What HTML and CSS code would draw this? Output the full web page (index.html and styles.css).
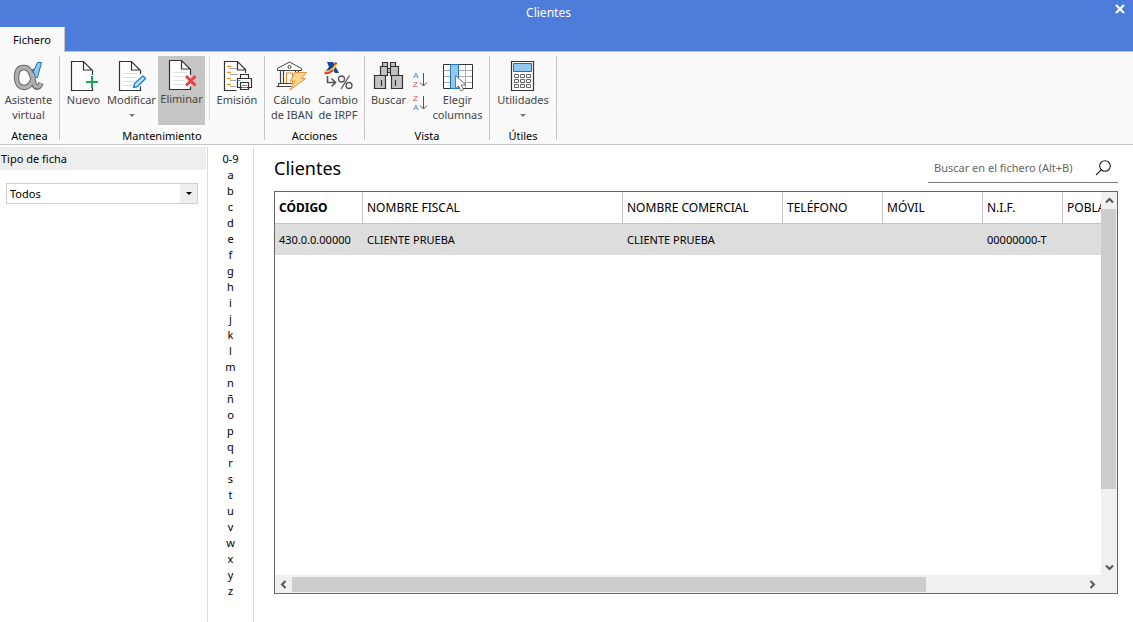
FILE: index.html
```html
<!DOCTYPE html>
<html lang="es">
<head>
<meta charset="utf-8">
<meta name="viewport" content="width=device-width, initial-scale=1">
<title>Clientes</title>
<link rel="stylesheet" href="styles.css">
</head>
<body>
<div class="window">
  <header class="titlebar">
    <div class="title">Clientes</div>
    <button class="close" aria-label="Cerrar">
      <svg width="10" height="10" viewBox="0 0 10 10"><path d="M1 1l8 8M9 1l-8 8" stroke="#fff" stroke-width="2.2"/></svg>
    </button>
  </header>
  <nav class="tabs"><button class="tab">Fichero</button></nav>

  <div class="ribbon">
    <section class="group">
      <div class="tools">
        <button class="tool tool-full">
          <svg width="32" height="32" viewBox="0 0 32 32" fill="none">
            <path d="M22 9C21 18 18 27.500 11 27.500C6 27.500 3.500 23 3.500 17.500C3.500 11 6 7.500 11 7.500C18 7.500 19 17 21 23.500C22 28.500 26 28.500 28 23" stroke="#666" stroke-width="5.400"/>
            <path d="M22 10C21 18 18 27.500 11 27.500C6 27.500 3.500 23 3.500 17.500C3.500 11 6 7.500 11 7.500C18 7.500 19 17 21 23.500C22 28 26 28 28 23.500" stroke="#b0b0b0" stroke-width="3.400"/>
            <path d="M24.500 2.500h4l-4 15h-2l-2-6z" fill="#92c8ef" stroke="#1d6fb5"/>
          </svg>
          <span>Asistente<br>virtual</span>
        </button>
      </div>
      <h2 class="caption">Atenea</h2>
    </section>

    <section class="group">
      <div class="tools">
        <button class="tool tool-s">
          <svg width="32" height="32" viewBox="0 0 32 32" fill="none">
            <path d="M22.500 15V9.500L14.500 1.500H3.500v29h18" fill="#fff"/>
            <path d="M24.500 15V10.500L15.500 1.500H3.500v29h21v-3M15.500 2v8h9" stroke="#333" stroke-width="1.200"/>
            <path d="M24 16v12M18 22h12" stroke="#16a951" stroke-width="2"/>
          </svg>
          <span>Nuevo</span>
        </button>
        <button class="tool tool-m">
          <svg width="32" height="32" viewBox="0 0 32 32" fill="none">
            <path d="M24.500 15V10.500L15.500 1.500H3.500v29h21v-4" fill="#fff"/>
            <path d="M24.500 14V10.500L15.500 1.500H3.500v29h21v-4M15.500 2v8h9" stroke="#333" stroke-width="1.200"/>
            <path d="M7 13.500h14M7 17.500h14M7 21.500h11M7 25.500h9" stroke="#ddd"/>
            <path d="M17.500 27.500l1-4L27 16l2.500 2.500-8 8z" fill="#c4e3f7" stroke="#2586cd" stroke-width="1.400"/>
          </svg>
          <span>Modificar</span>
          <i class="drop"></i>
        </button>
        <button class="tool tool-s tool-active">
          <svg width="32" height="32" viewBox="0 0 32 32" fill="none">
            <path d="M24.500 10.500L15.500 1.500H3.500v29h21z" fill="#fff"/>
            <path d="M24.500 16V10.500L15.500 1.500H3.500v29h21v-3M15.500 2v8h9" stroke="#333" stroke-width="1.200"/>
            <path d="M7 13.500h14M7 17.500h12M7 21.500h12M7 25.500h11" stroke="#e2e2e2"/>
            <path d="M20 17l9.500 9.500M29.500 17L20 26.500" stroke="#ee3f3f" stroke-width="3"/>
          </svg>
          <span>Eliminar</span>
        </button>
        <i class="divider"></i>
        <button class="tool tool-l">
          <svg width="32" height="32" viewBox="0 0 32 32" fill="none">
            <path d="M24.500 10.500L16.500 1.500H3.500v29h21z" fill="#fff"/>
            <path d="M24.500 13V9.500L16.500 1.500H3.500v29h12M16.500 2v8h8" stroke="#333" stroke-width="1.200"/>
            <path d="M6 6.500h4M6 12.500h4M6 18.500h4M6 24.500h4" stroke="#f39a1e" stroke-width="1.400"/>
            <path d="M9 8.500h7M9 14.500h8M9 20.500h6M9 26.500h6" stroke="#aaa"/>
            <path d="M16.500 27.500v-9h14v9zM19.500 18.500v-4h8v4M19.500 22.500h8v7h-8z" fill="#fff" stroke="#333" stroke-width="1.200"/>
            <path d="M21 25.500h5M21 27.500h5" stroke="#888"/><path d="M17.500 20.500h2" stroke="#1683d8"/>
          </svg>
          <span>Emisión</span>
        </button>
      </div>
      <h2 class="caption">Mantenimiento</h2>
    </section>

    <section class="group">
      <div class="tools tools-center">
        <button class="tool tool-s">
          <svg width="32" height="32" viewBox="0 0 32 32" fill="none">
            <path d="M1.500 8.500L13.500 2l12 6.500v2h-24z" fill="#fff" stroke="#444"/>
            <circle cx="13.500" cy="7" r="1.500" stroke="#444"/>
            <path d="M4.500 11v12M7.500 11v12M19.500 11v5M22.500 11v3M2.500 23.500h14M.500 26.500h15M2.500 23v3" stroke="#444" stroke-width="1.200"/>
            <path d="M10.500 23v-10h6v10" stroke="#e88827"/>
            <path d="M19 12.500h11.500l-5 6h4L14 30l5-9h-5z" fill="#f9d78f" stroke="#e99138"/>
          </svg>
          <span>Cálculo<br>de IBAN</span>
        </button>
        <button class="tool tool-s">
          <svg width="32" height="32" viewBox="0 0 32 32" fill="none">
            <path d="M5 2h6l6 11h-4l-3-5-4 4H3l4-5z" fill="#17449c"/>
            <path d="M2.500 12C8 12 13 9 14.500 3" stroke="#f5d33a" stroke-width="2.400"/>
            <path d="M2.500 13.500C6 13.500 9 12 11 10.500" stroke="#e1332f" stroke-width="2"/>
            <path d="M12.500 4.500l2-2" stroke="#e1332f" stroke-width="2"/>
            <path d="M5.500 16v6.500h8M9.500 18.500l4 4-4 4" stroke="#555" stroke-width="1.600"/>
            <circle cx="19.500" cy="19" r="3" stroke="#555" stroke-width="1.300"/><circle cx="27" cy="25.500" r="3" stroke="#555" stroke-width="1.300"/>
            <path d="M27.500 15.500l-8.500 13.500" stroke="#555" stroke-width="1.300"/>
          </svg>
          <span>Cambio<br>de IRPF</span>
        </button>
      </div>
      <h2 class="caption">Acciones</h2>
    </section>

    <section class="group">
      <div class="tools">
        <button class="tool tool-s">
          <svg width="32" height="32" viewBox="0 0 32 32" fill="#c3c2c0" stroke="#333" stroke-width="1.200">
            <path d="M9.500 2.500h5v4h-5zM17.500 2.500h5v4h-5zM7.500 6.500h7v9h-7zM17.500 6.500h8v9h-8zM14.500 8.500h3v4h-3zM1.500 15.500h11v13h-11zM18.500 15.500h11v13h-11z"/>
            <path d="M8.500 20v6M22.500 20v6" />
          </svg>
          <span>Buscar</span>
        </button>
        <div class="sorts">
          <button class="sort" aria-label="Orden ascendente">
            <svg width="16" height="20" viewBox="0 0 16 20" fill="none">
              <text class="sort-letter" x="1" y="8" fill="#2b8ccf">A</text><text class="sort-letter" x="1" y="17" fill="#e94b4b">Z</text>
              <path d="M11.500 3v13M8 12.500l3.500 3.500 3.500-3.500" stroke="#555"/>
            </svg>
          </button>
          <button class="sort" aria-label="Orden descendente">
            <svg width="16" height="20" viewBox="0 0 16 20" fill="none">
              <text class="sort-letter" x="1" y="8" fill="#e94b4b">Z</text><text class="sort-letter" x="1" y="17" fill="#2b8ccf">A</text>
              <path d="M11.500 3v13M8 12.500l3.500 3.500 3.500-3.500" stroke="#555"/>
            </svg>
          </button>
        </div>
        <button class="tool tool-xl">
          <svg width="32" height="32" viewBox="0 0 32 32" fill="none">
            <path d="M1.500 4.500h29v24h-29z" fill="#fff"/>
            <path d="M2 10.500h28M2 16.500h28M2 22.500h28M23.500 5v23" stroke="#aaa"/>
            <path d="M1.500 4.500h29v24h-29z" stroke="#333"/>
            <path d="M8.500 4.500h8v24h-8z" fill="#92c8ef" stroke="#1d76bd"/>
            <path d="M13.500 15.500v13l3-2.500 2.500 5 2.500-1.500-2.500-4.500h5z" fill="#fff" stroke="#777"/>
          </svg>
          <span>Elegir<br>columnas</span>
        </button>
      </div>
      <h2 class="caption">Vista</h2>
    </section>

    <section class="group">
      <div class="tools">
        <button class="tool tool-full">
          <svg width="32" height="32" viewBox="0 0 32 32" fill="none">
            <path d="M4.500 1.500h22v29h-22z" fill="#fff" stroke="#333" stroke-width="1.200"/>
            <path d="M6.500 3.500h18v8h-18z" fill="#92c8ef" stroke="#1d6fa8"/>
            <path d="M7.500 14.500h4v3h-4zM13.500 14.500h4v3h-4zM19.500 14.500h4v3h-4zM7.500 19.500h4v3h-4zM13.500 19.500h4v3h-4zM19.500 19.500h4v3h-4zM7.500 24.500h4v3h-4zM13.500 24.500h4v3h-4zM19.500 24.500h4v3h-4z" stroke="#666"/>
          </svg>
          <span>Utilidades</span>
          <i class="drop"></i>
        </button>
      </div>
      <h2 class="caption">Útiles</h2>
    </section>
  </div>

  <div class="workspace">
    <aside class="filters">
      <label class="filter-title" for="tipo">Tipo de ficha</label>
      <div class="combo">
        <select id="tipo" class="combo-select"><option>Todos</option></select>
        <span class="combo-arrow"><i class="combo-tip"></i></span>
      </div>
    </aside>
    <nav class="index">
      <a class="letter" href="#">0-9</a><a class="letter" href="#">a</a><a class="letter" href="#">b</a><a class="letter" href="#">c</a><a class="letter" href="#">d</a><a class="letter" href="#">e</a><a class="letter" href="#">f</a><a class="letter" href="#">g</a><a class="letter" href="#">h</a><a class="letter" href="#">i</a><a class="letter" href="#">j</a><a class="letter" href="#">k</a><a class="letter" href="#">l</a><a class="letter" href="#">m</a><a class="letter" href="#">n</a><a class="letter" href="#">ñ</a><a class="letter" href="#">o</a><a class="letter" href="#">p</a><a class="letter" href="#">q</a><a class="letter" href="#">r</a><a class="letter" href="#">s</a><a class="letter" href="#">t</a><a class="letter" href="#">u</a><a class="letter" href="#">v</a><a class="letter" href="#">w</a><a class="letter" href="#">x</a><a class="letter" href="#">y</a><a class="letter" href="#">z</a>
    </nav>
    <main class="content">
      <div class="content-head">
        <h1 class="heading">Clientes</h1>
        <div class="search">
          <input class="search-input" type="text" placeholder="Buscar en el fichero (Alt+B)" aria-label="Buscar en el fichero">
          <button class="search-button" aria-label="Buscar">
            <svg width="17" height="17" viewBox="0 0 17 17" fill="none" stroke="#222" stroke-width="1.100"><circle cx="10" cy="7" r="5.300"/><path d="M6.200 10.800L1 16"/></svg>
          </button>
        </div>
      </div>
      <div class="grid">
        <div class="grid-view">
          <table class="table">
            <colgroup><col class="col-code"><col class="col-name"><col class="col-trade"><col class="col-phone"><col class="col-phone"><col class="col-nif"><col class="col-town"></colgroup>
            <thead><tr><th class="sorted">CÓDIGO</th><th>NOMBRE FISCAL</th><th>NOMBRE COMERCIAL</th><th>TELÉFONO</th><th>MÓVIL</th><th>N.I.F.</th><th>POBLACIÓN</th></tr></thead>
            <tbody><tr><td>430.0.0.00000</td><td>CLIENTE PRUEBA</td><td>CLIENTE PRUEBA</td><td></td><td></td><td>00000000-T</td><td></td></tr></tbody>
          </table>
        </div>
        <div class="vbar">
          <button class="arrow" aria-label="Subir"><svg width="9" height="7" viewBox="0 0 9 7"><path d="M1 5.500L4.500 2 8 5.500" fill="none" stroke="#555" stroke-width="2"/></svg></button>
          <div class="vtrack"><div class="vthumb"></div></div>
          <button class="arrow" aria-label="Bajar"><svg width="9" height="7" viewBox="0 0 9 7"><path d="M1 1.500L4.500 5 8 1.500" fill="none" stroke="#555" stroke-width="2"/></svg></button>
        </div>
        <div class="hbar">
          <button class="arrow" aria-label="Izquierda"><svg width="7" height="9" viewBox="0 0 7 9"><path d="M5.500 1L2 4.500 5.500 8" fill="none" stroke="#555" stroke-width="2"/></svg></button>
          <div class="htrack"><div class="hthumb"></div></div>
          <button class="arrow" aria-label="Derecha"><svg width="7" height="9" viewBox="0 0 7 9"><path d="M1.500 1L5 4.500 1.500 8" fill="none" stroke="#555" stroke-width="2"/></svg></button>
        </div>
        <div class="corner"></div>
      </div>
    </main>
  </div>
</div>
</body>
</html>
```
FILE: styles.css
```css
* { box-sizing: border-box; }
body { margin: 0; background: #fff; color: #000; font: 11px/15px "Noto Sans", "Open Sans", sans-serif; }
button, input, select { font: inherit; color: inherit; margin: 0; padding: 0; border: 0; background: none; border-radius: 0; }
h1, h2 { margin: 0; font-weight: 400; }
svg { display: block; flex: none; }
.window { display: flex; flex-direction: column; min-height: 100vh; }

.titlebar { display: flex; align-items: center; height: 27px; padding: 0 8px 2px 0; background: #4d7cdb; color: #fff; }
.title { flex: 1; padding-right: 22px; text-align: center; font-size: 12px; }
.title { padding-right: 18px; }
.close { width: 10px; height: 10px; margin-bottom: 8px; }
.tabs { display: flex; height: 24px; background: #4d7cdb; }
.tab { width: 65px; height: 25px; background: #fafafa; border-right: 1px solid #c6c6c6; z-index: 1; }

.ribbon { display: flex; height: 94px; padding: 4px 0; background: #fafafa; border-top: 1px solid #c6c6c6; border-bottom: 1px solid #c6c6c6; }
.group { display: flex; flex-direction: column; justify-content: space-between; border-right: 1px solid #c6c6c6; }
.tools { display: flex; height: 69px; }
.tools-center { padding: 0 3px 0 4px; }
.tool { display: flex; flex-direction: column; align-items: center; padding-top: 4px; color: #444; line-height: 15px; white-space: nowrap; }
.tool-s { width: 47px; }
.tools-center .tool-s { width: 46px; }
.tool-m { width: 49px; margin-right: 2px; }
.tool-l { width: 54px; }
.tool-xl { width: 59px; margin-right: 2px; }
.tool-full { width: 66px; }
.group:first-child .tool-full { width: 59px; padding-right: 2px; }
.tool-active { padding-top: 3px; background: #c6c6c6; }
.divider { width: 1px; height: 65px; margin-left: 4px; background: #ddd; }
.drop { margin-top: 7px; border: 3px solid transparent; border-top-color: #777; border-bottom: 0; }
.caption { font-size: 11px; line-height: 9px; text-align: center; }
.sorts { display: flex; flex-direction: column; gap: 3px; padding-top: 14px; }
.sort { width: 16px; height: 20px; }
.sort-letter { font: 8px "Liberation Sans", sans-serif; }

.workspace { display: flex; flex: 1; padding-top: 2px; }
.filters { width: 208px; border-right: 1px solid #d9d9d9; }
.filter-title { display: block; height: 23px; margin-right: 1px; padding-left: 1px; background: #eee; line-height: 23px; }
.combo { display: grid; grid-template-columns: 1fr 17px; height: 21px; margin: 13px 9px 0 6px; border: 1px solid #d0d0d0; }
.combo-select { grid-area: 1 / 1 / 2 / 3; padding-left: 3px; appearance: none; }
.combo-arrow { grid-area: 1 / 2; display: grid; place-items: center; background: #eee; pointer-events: none; }
.combo-tip { border: 3px solid transparent; border-top-color: #000; border-bottom: 0; }

.index { display: flex; flex-direction: column; width: 46px; padding-top: 4px; border-right: 1px solid #d9d9d9; }
.letter { height: 16px; line-height: 16px; text-align: center; color: #000; text-decoration: none; }

.content { flex: 1; display: flex; flex-direction: column; min-width: 0; padding: 5px 15px 28px 20px; }
.content-head { display: flex; justify-content: space-between; height: 39px; }
.heading { font-size: 18px; line-height: 32px; }
.search { display: flex; align-items: center; width: 190px; height: 31px; padding: 0 6px; border-bottom: 1px solid #777; }
.search-input { flex: 1; min-width: 0; outline: 0; }
.search-input::placeholder { color: #666; opacity: 1; }
.grid { flex: 1; display: grid; grid-template-columns: minmax(0, 1fr) 16px; grid-template-rows: 1fr 17px; border: 1px solid #666; }
.grid-view { overflow: hidden; border-bottom: 1px solid #eee; }
.table { width: 888px; table-layout: fixed; border-collapse: separate; border-spacing: 0; font-size: 12px; }
.col-code { width: 88px; }
.col-name { width: 260px; }
.col-trade { width: 160px; }
.col-phone, .col-town { width: 100px; }
.col-nif { width: 80px; }
.table th, .table td { height: 32px; padding: 0 4px; text-align: left; font-weight: 400; white-space: nowrap; }
.table th { border-right: 1px solid #c6c6c6; border-bottom: 1px solid #c6c6c6; }
.table .sorted { font-weight: 700; }
.table td { height: 31px; background: #ddd; font-size: 11px; }
.vbar { display: flex; flex-direction: column; background: #f0f0f0; }
.hbar { display: flex; background: #f0f0f0; }
.arrow { display: grid; place-items: center; width: 16px; height: 17px; }
.vtrack { flex: 1; }
.vthumb { width: 15px; height: 80%; background: #cdcdcd; }
.hbar .arrow { width: 17px; }
.htrack { flex: 1; padding-top: 1px; }
.hthumb { width: 80%; height: 15px; background: #cdcdcd; }
.corner { background: #f0f0f0; }
```
